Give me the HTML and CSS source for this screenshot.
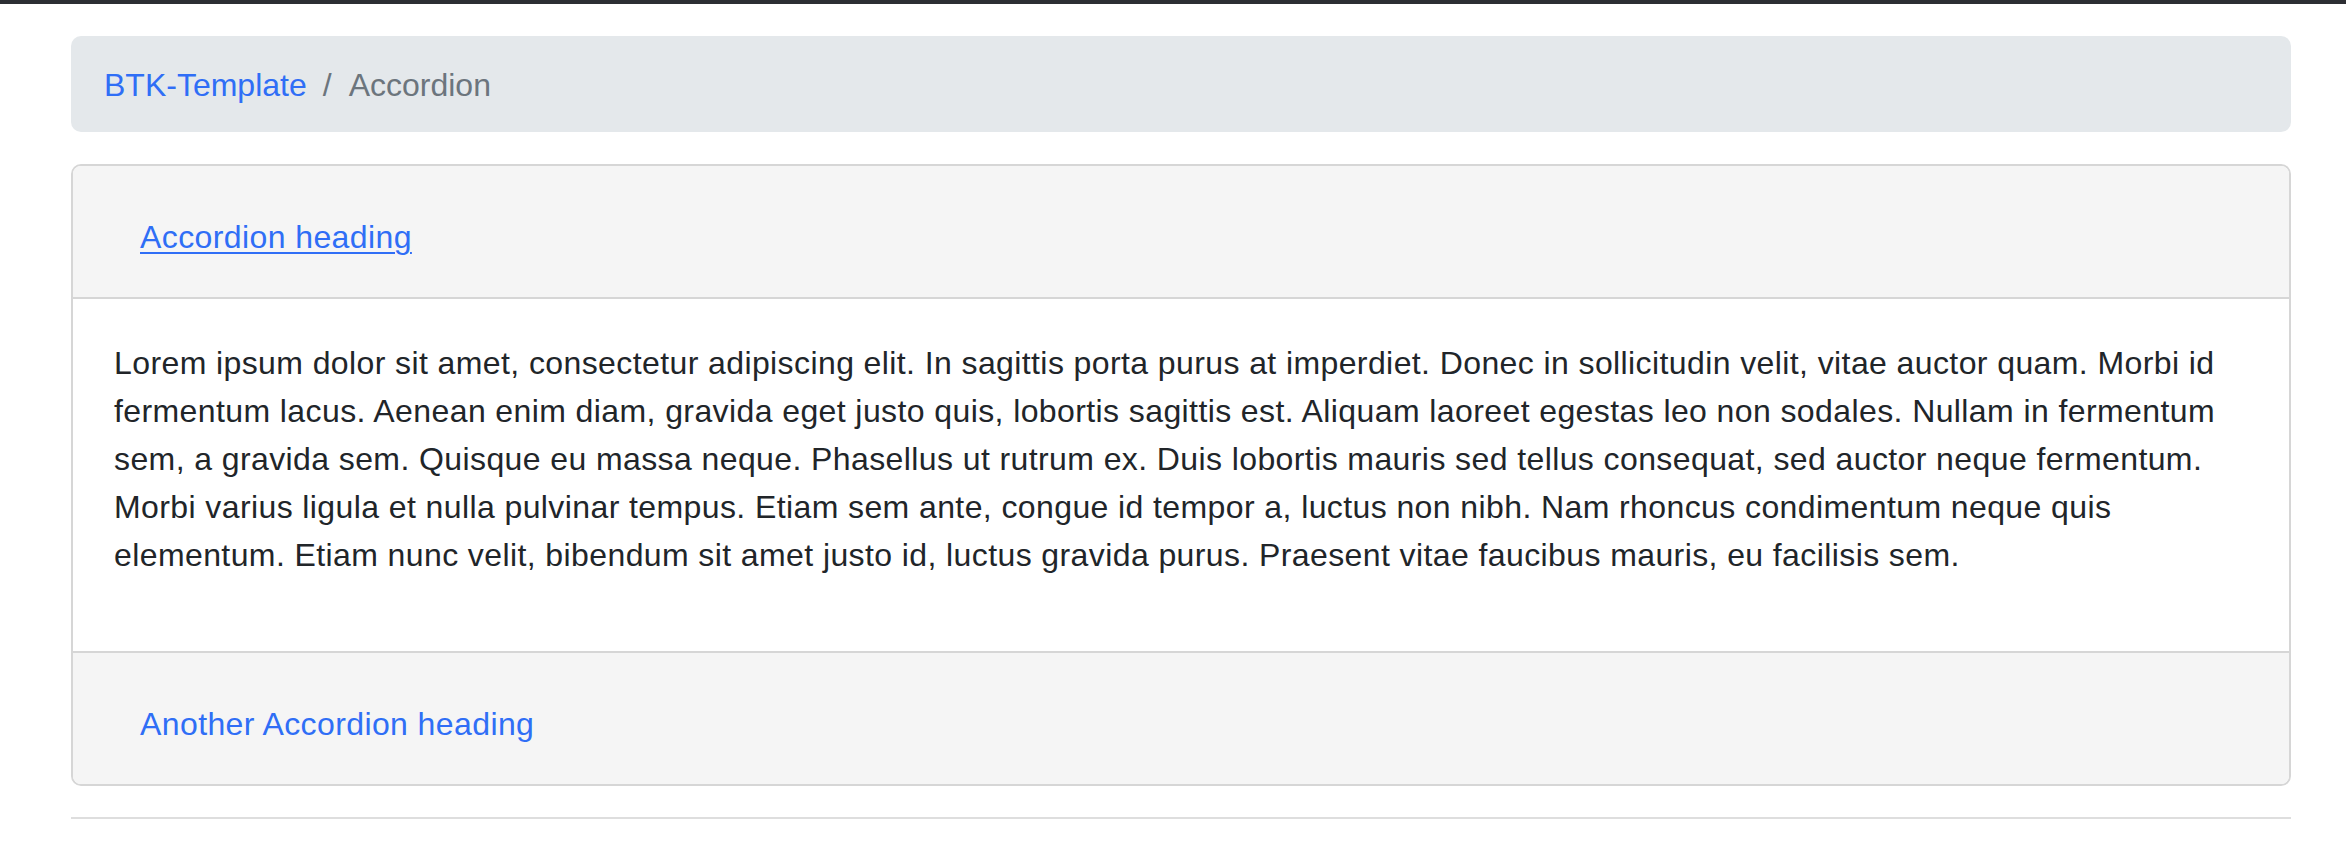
FILE: index.html
```html
<!DOCTYPE html>
<html lang="en">
<head>
<meta charset="utf-8">
<title>Accordion</title>
<link rel="stylesheet" href="styles.css">
</head>
<body>
<div class="topbar"></div>
<main class="page">
  <nav class="breadcrumb">
    <a class="crumb-link" href="#">BTK-Template</a>
    <span class="crumb-sep">/</span>
    <span class="crumb-current">Accordion</span>
  </nav>
  <section class="accordion">
    <div class="acc-head">
      <a class="acc-link acc-link-active" href="#">Accordion heading</a>
    </div>
    <div class="acc-body">
      <p>Lorem ipsum dolor sit amet, consectetur adipiscing elit. In sagittis porta purus at imperdiet. Donec in sollicitudin velit, vitae auctor quam. Morbi id fermentum lacus. Aenean enim diam, gravida eget justo quis, lobortis sagittis est. Aliquam laoreet egestas leo non sodales. Nullam in fermentum sem, a gravida sem. Quisque eu massa neque. Phasellus ut rutrum ex. Duis lobortis mauris sed tellus consequat, sed auctor neque fermentum. Morbi varius ligula et nulla pulvinar tempus. Etiam sem ante, congue id tempor a, luctus non nibh. Nam rhoncus condimentum neque quis elementum. Etiam nunc velit, bibendum sit amet justo id, luctus gravida purus. Praesent vitae faucibus mauris, eu facilisis sem.</p>
    </div>
    <div class="acc-head acc-head-last">
      <a class="acc-link" href="#">Another Accordion heading</a>
    </div>
  </section>
  <hr class="rule">
</main>
</body>
</html>
```
FILE: styles.css
```css
html, body {
  margin: 0;
  padding: 0;
  background: #ffffff;
}
body {
  font-family: "Liberation Sans", Arial, sans-serif;
  font-size: 32px;
  line-height: 48px;
  color: #212529;
}
.topbar {
  height: 4px;
  background: #2c2e33;
}
.page {
  padding: 32px 55px 0 71px;
}
.breadcrumb {
  display: flex;
  align-items: baseline;
  background: #e4e8eb;
  border-radius: 10px;
  padding: 25px 32px 23px 33px;
}
.crumb-link {
  color: #2f6ef6;
  text-decoration: none;
}
.crumb-sep {
  color: #6c757d;
  padding: 0 17px 0 16px;
}
.crumb-current {
  color: #6c757d;
}
.accordion {
  margin-top: 32px;
  border: 2px solid #d6d6d6;
  border-radius: 10px;
  overflow: hidden;
}
.acc-head {
  background: #f5f5f5;
  padding: 47px 40px 36px 67px;
  border-bottom: 2px solid #d6d6d6;
}
.acc-head-last {
  border-bottom: 0;
}
.acc-link {
  color: #2f6ef6;
  text-decoration: none;
  letter-spacing: 0.4px;
}
.acc-link-active {
  text-decoration: underline;
  text-decoration-thickness: 2px;
  text-underline-offset: 4px;
}
.acc-body {
  padding: 40px 40px 40px 41px;
  background: #ffffff;
  border-bottom: 2px solid #d6d6d6;
}
.acc-body p {
  margin: 0 0 32px;
  letter-spacing: 0.4px;
}
.rule {
  margin: 31px 0 0;
  border: 0;
  height: 2px;
  background: #dedede;
}
```
